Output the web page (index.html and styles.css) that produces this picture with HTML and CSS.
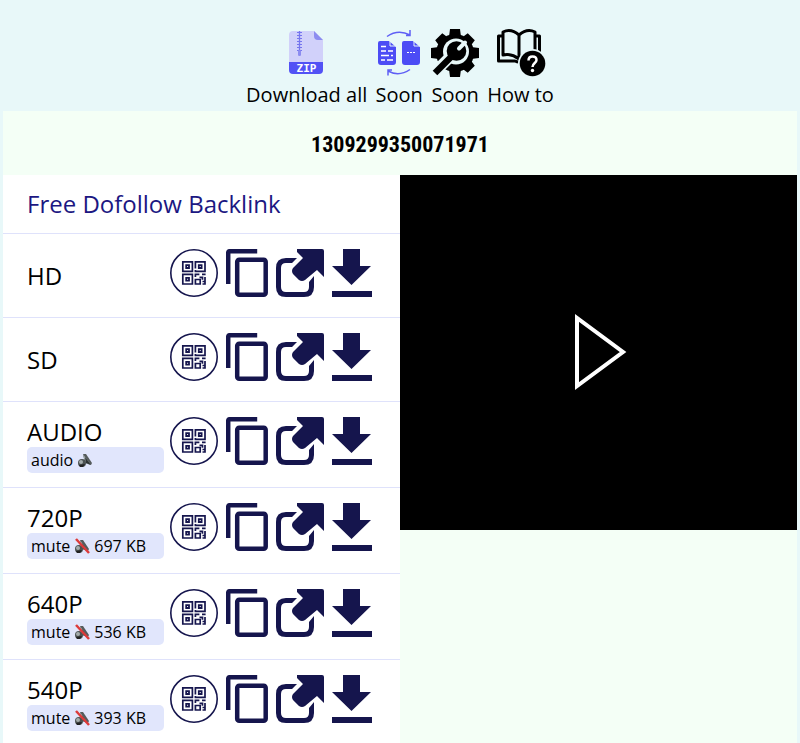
FILE: index.html
```html
<!DOCTYPE html>
<html lang="en">

<head>
  <meta charset="UTF-8">
  <meta name="viewport" content="width=device-width, initial-scale=1.0">
  <title>1309299350071971</title>
  <link rel="stylesheet" href="styles.css">
</head>

<body>
  <!-- Shared icons -->
  <svg class="sprite" aria-hidden="true">
    <symbol id="qr" viewBox="0 0 48 48">
      <circle cx="24" cy="24" r="23.2" fill="none" stroke="currentColor" stroke-width="1.6" />
      <g fill="none" stroke="currentColor" stroke-width="1.7">
        <path d="M12.800 12.800h9.600v9.600h-9.600zM12.800 25.400h9.600V35h-9.600zM25.400 19.500v-6.700H35v9.600h-9.600v-1.500" />
        <path d="M16.200 16.200h2.800V19h-2.800zM16.200 28.800h2.800v2.800h-2.800zM28.800 16.200h2.800V19h-2.800z" stroke-width="1.800" />
        <path d="M25.400 28v-2.600h4M32 25.400h3.600M25.400 30.500h4.800V35h-4.800zM29.500 28.300h3v2.500M35 28v7h-2.500M32.500 32.500H35" />
      </g>
    </symbol>
    <symbol id="copy" viewBox="0 0 42 48">
      <g fill="none" stroke="currentColor" stroke-width="4.5">
        <path d="M2.200 35V4.200q0-2 2-2h27" />
        <rect x="11.200" y="10.700" width="28.500" height="35" rx="2" />
      </g>
    </symbol>
    <symbol id="open" viewBox="0 0 48 48">
      <path fill="currentColor" d="M21 9H10Q0 9 0 19v19q0 10 10 10h18q10 0 10-10V27l-5 6v5q0 5-5 5H10q-5 0-5-5V19q0-5 5-5h6z" />
      <path fill="currentColor" d="M21 0h25q2 0 2 2v26l-7-7-12 10q-3 2-6 0l-6-6q-2-3 0-6L27 9l-6-6z" />
    </symbol>
    <symbol id="down" viewBox="0 0 40 48">
      <path fill="currentColor" d="M11 0h17v17h11L19.500 36 0 17h11zM0 42h40v6H0z" />
    </symbol>
    <symbol id="speaker" viewBox="0 0 16 16">
      <path fill="#555b5c" d="M6 2l3 0 6 9-1 2-6-2z" />
      <path fill="#9aa3a3" d="M6 2l8 11-6-2z" />
      <path fill="#2d3333" d="M8 5l6 8-5-2z" />
      <circle cx="5" cy="11" r="4" fill="#4c5252" />
      <circle cx="4" cy="10" r="2" fill="#a4acac" />
      <path fill="#222" d="M2 13l6-1-2 3H3z" />
    </symbol>
    <symbol id="muted" viewBox="0 0 16 16">
      <use href="#speaker" />
      <path stroke="#dd3b3b" stroke-width="2.5" d="M2 1l13 14" />
    </symbol>
  </svg>

  <header class="toolbar">
    <a class="tool" href="#">
      <svg width="48" height="48" viewBox="0 0 48 48" aria-hidden="true">
        <path fill="#d1d1fa" d="M10 2h21l9 9v28H6V6q0-4 4-4z" />
        <path fill="#8c8cf0" d="M31 2l9 9h-5q-4 0-4-4z" />
        <path stroke="#7676ee" stroke-width="1.300" d="M16.500 2v23" />
        <path stroke="#7676ee" stroke-width="5" stroke-dasharray="1 2" d="M16.500 3v20" />
        <rect x="15" y="21" width="3" height="6" rx="1.200" fill="#8c8cf0" />
        <path fill="#5252f5" d="M6 33h34v8q0 4-4 4H10q-4 0-4-4z" />
        <text class="zip-text" x="23.500" y="43" text-anchor="middle">ZIP</text>
      </svg>
      Download all
    </a>
    <a class="tool" href="#">
      <svg width="48" height="48" viewBox="0 0 48 48" aria-hidden="true">
        <path fill="#4c4cf5" d="M5 12h9l7 6v15q0 3-3 3H6q-3 0-3-3V14q0-2 2-2zM29 12h9l7 6v15q0 3-3 3H30q-3 0-3-3V14q0-2 2-2z" />
        <path fill="none" stroke="#e8f8f9" d="M15 12v5h6M39 12v5h6" />
        <path stroke="#fff" stroke-width="1.300" d="M6 17.500h5M6 22h5M13 22h5M6 26.500h8M16 26.500h2M6 31h4M12 31h6" />
        <path stroke="#fff" stroke-dasharray="2 1" d="M32 23.500h8" />
        <path fill="none" stroke="#5f5ff5" stroke-width="1.500" d="M12 7.500Q23 0 35 6M35 1v5.500h-4M35 40.500Q24 48 13 42M13 46.500V41h4" />
      </svg>
      Soon
    </a>
    <a class="tool" href="#">
      <svg width="48" height="48" viewBox="0 0 48 48" aria-hidden="true">
        <circle cx="24" cy="24" r="19" />
        <path d="M18 8l1-8h10l1 8zM18 40l1 8h10l1-8z" transform="rotate(0 24 24)" />
        <path d="M18 8l1-8h10l1 8zM18 40l1 8h10l1-8z" transform="rotate(90 24 24)" />
        <path d="M18 8l1-7h10l1 7z" transform="rotate(45 24 24)" />
        <path d="M18 8l1-7h10l1 7zM18 40l1 7h10l1-7z" transform="rotate(-45 24 24)" />
        <circle cx="25" cy="22.500" r="13" fill="#e8f8f9" />
        <path stroke="#e8f8f9" stroke-width="11" d="M22 25L-1 48" />
        <path stroke="#000" stroke-width="6.500" d="M24 24L4 44" />
        <circle cx="25.500" cy="22" r="9.800" />
        <path stroke="#e8f8f9" stroke-width="4" stroke-linecap="round" d="M28 19.500l6-6" />
      </svg>
      Soon
    </a>
    <a class="tool" href="#">
      <svg width="48" height="48" viewBox="0 0 48 48" aria-hidden="true">
        <g fill="none" stroke="#000" stroke-width="3" stroke-linejoin="round">
          <path d="M22 6Q14-1 6 3v23q8-2 16 4Q30 24 38 26V3Q30-1 22 6v24" />
          <path d="M6 7H1.500v25H18q4 2 8 0M38 7h4.500v16" />
        </g>
        <circle cx="35.500" cy="34.500" r="14.500" fill="#e8f8f9" />
        <circle cx="35.500" cy="34.500" r="12.800" />
        <path fill="none" stroke="#fff" stroke-width="2.500" d="M31.500 31.500q0-4 4-4t4 3.500c0 3-4 3-4 7" />
        <circle cx="35.500" cy="41.500" r="1.700" fill="#fff" />
      </svg>
      How to
    </a>
  </header>

  <main class="result">
    <h1 class="result-title">1309299350071971</h1>
    <div class="columns">
      <ul class="downloads">
        <li class="promo"><a href="#">Free Dofollow Backlink</a></li>
        <li class="row">
          <div class="label">HD</div>
          <div class="actions">
            <button aria-label="QR code"><svg width="48" height="48"><use href="#qr" /></svg></button>
            <button aria-label="Copy"><svg width="42" height="48"><use href="#copy" /></svg></button>
            <a href="#" aria-label="Open"><svg width="48" height="48"><use href="#open" /></svg></a>
            <a href="#" aria-label="Download"><svg width="40" height="48"><use href="#down" /></svg></a>
          </div>
        </li>
        <li class="row">
          <div class="label">SD</div>
          <div class="actions">
            <button aria-label="QR code"><svg width="48" height="48"><use href="#qr" /></svg></button>
            <button aria-label="Copy"><svg width="42" height="48"><use href="#copy" /></svg></button>
            <a href="#" aria-label="Open"><svg width="48" height="48"><use href="#open" /></svg></a>
            <a href="#" aria-label="Download"><svg width="40" height="48"><use href="#down" /></svg></a>
          </div>
        </li>
        <li class="row">
          <div class="label">AUDIO
            <span class="badge">audio <svg width="16" height="16"><use href="#speaker" /></svg></span>
          </div>
          <div class="actions">
            <button aria-label="QR code"><svg width="48" height="48"><use href="#qr" /></svg></button>
            <button aria-label="Copy"><svg width="42" height="48"><use href="#copy" /></svg></button>
            <a href="#" aria-label="Open"><svg width="48" height="48"><use href="#open" /></svg></a>
            <a href="#" aria-label="Download"><svg width="40" height="48"><use href="#down" /></svg></a>
          </div>
        </li>
        <li class="row">
          <div class="label">720P
            <span class="badge">mute <svg width="16" height="16"><use href="#muted" /></svg> 697 KB</span>
          </div>
          <div class="actions">
            <button aria-label="QR code"><svg width="48" height="48"><use href="#qr" /></svg></button>
            <button aria-label="Copy"><svg width="42" height="48"><use href="#copy" /></svg></button>
            <a href="#" aria-label="Open"><svg width="48" height="48"><use href="#open" /></svg></a>
            <a href="#" aria-label="Download"><svg width="40" height="48"><use href="#down" /></svg></a>
          </div>
        </li>
        <li class="row">
          <div class="label">640P
            <span class="badge">mute <svg width="16" height="16"><use href="#muted" /></svg> 536 KB</span>
          </div>
          <div class="actions">
            <button aria-label="QR code"><svg width="48" height="48"><use href="#qr" /></svg></button>
            <button aria-label="Copy"><svg width="42" height="48"><use href="#copy" /></svg></button>
            <a href="#" aria-label="Open"><svg width="48" height="48"><use href="#open" /></svg></a>
            <a href="#" aria-label="Download"><svg width="40" height="48"><use href="#down" /></svg></a>
          </div>
        </li>
        <li class="row">
          <div class="label">540P
            <span class="badge">mute <svg width="16" height="16"><use href="#muted" /></svg> 393 KB</span>
          </div>
          <div class="actions">
            <button aria-label="QR code"><svg width="48" height="48"><use href="#qr" /></svg></button>
            <button aria-label="Copy"><svg width="42" height="48"><use href="#copy" /></svg></button>
            <a href="#" aria-label="Open"><svg width="48" height="48"><use href="#open" /></svg></a>
            <a href="#" aria-label="Download"><svg width="40" height="48"><use href="#down" /></svg></a>
          </div>
        </li>
      </ul>

      <div class="player">
        <button aria-label="Play">
          <svg width="50" height="76" viewBox="0 0 50 76">
            <path fill="none" stroke="#fff" stroke-width="4" d="M3 3v68l46-34z" />
          </svg>
        </button>
      </div>
    </div>
  </main>
</body>

</html>
```
FILE: styles.css
```css
* {
  box-sizing: border-box;
}

body {
  margin: 0;
  background: #e8f8f9;
  color: #000;
  font-family: "Open Sans", sans-serif;
}

a {
  color: inherit;
  text-decoration: none;
}

button {
  padding: 0;
  border: 0;
  background: none;
  color: inherit;
  cursor: pointer;
}

svg {
  display: block;
  overflow: visible;
}

.sprite {
  position: absolute;
  width: 0;
  height: 0;
}

.toolbar {
  display: flex;
  justify-content: center;
  gap: 8px;
  padding: 29px 0 2px;
  font-size: 20px;
  line-height: 28px;
}

.tool {
  display: flex;
  flex-direction: column;
  align-items: center;
  gap: 4px;
}

.zip-text {
  fill: #fff;
  font: bold 11px "DejaVu Sans Mono", monospace;
}

.result {
  margin: 0 3px;
  background: #f4fff6;
}

.result-title {
  margin: 0;
  padding: 18px 0 14px;
  font: bold 22px/32px "Roboto Condensed", "Liberation Sans Narrow", sans-serif;
  text-align: center;
}

.columns {
  display: flex;
  align-items: flex-start;
}

.downloads {
  flex: 1;
  margin: 0;
  padding: 0;
  list-style: none;
  background: #fff;
  font-size: 24px;
  line-height: 30px;
}

.promo {
  padding: 14px 24px;
  border-bottom: 1px solid #dfe2fb;
  color: #1c1782;
}

.row {
  display: flex;
  gap: 6px;
  min-height: 84px;
  padding: 15px 24px 14px;
  border-bottom: 1px solid #dfe2fb;
}

.label {
  flex: 1;
  align-self: center;
}

.badge {
  display: flex;
  align-items: center;
  gap: 4px;
  padding: 0 4px;
  border-radius: 5px;
  background: #e1e6fc;
  font-size: 16px;
  line-height: 26px;
}

.actions {
  display: flex;
  align-items: flex-start;
  gap: 8px;
  padding-right: 4px;
  color: #15154d;
}

.player {
  display: flex;
  flex: 1;
  align-items: center;
  justify-content: center;
  height: 355px;
  background: #000;
}
```
